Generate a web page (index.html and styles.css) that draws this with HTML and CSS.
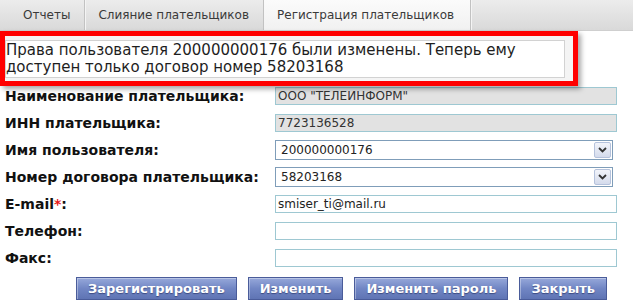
FILE: index.html
```html
<!DOCTYPE html>
<html lang="ru">
<head>
    <meta charset="UTF-8">
    <title>Регистрация плательщиков</title>
    <link rel="stylesheet" href="styles.css">
</head>
<body>
    <ul class="tabs">
        <li class="first">Отчеты</li>
        <li>Слияние плательщиков</li>
        <li class="active">Регистрация плательщиков</li>
    </ul>

    <!-- сообщение после изменения прав -->
    <div class="notice">
        <div class="msg">Права пользователя 200000000176 были изменены. Теперь ему доступен только договор номер 58203168</div>
    </div>

    <div class="form">
        <label>Наименование плательщика:</label>
        <input type="text" class="ro" value='ООО "ТЕЛЕИНФОРМ"' readonly>

        <label>ИНН плательщика:</label>
        <input type="text" class="ro" value="7723136528" readonly>

        <label>Имя пользователя:</label>
        <div class="select"><span>200000000176</span><i class="arrow"><svg width="9" height="6" viewBox="0 0 9 6"><path d="M1 1 L4.5 4.5 L8 1" fill="none" stroke="#333" stroke-width="1.8"/></svg></i></div>

        <label>Номер договора плательщика:</label>
        <div class="select"><span>58203168</span><i class="arrow"><svg width="9" height="6" viewBox="0 0 9 6"><path d="M1 1 L4.5 4.5 L8 1" fill="none" stroke="#333" stroke-width="1.8"/></svg></i></div>

        <label>E-mail<b class="req">*</b>:</label>
        <input type="text" value="smiser_ti@mail.ru">

        <label>Телефон:</label>
        <input type="text" value="">

        <label>Факс:</label>
        <input type="text" value="">
    </div>

    <div class="buttons">
        <button class="btn">Зарегистрировать</button>
        <button class="btn">Изменить</button>
        <button class="btn">Изменить пароль</button>
        <button class="btn">Закрыть</button>
    </div>
</body>
</html>
```

FILE: styles.css
```css
*{margin: 0;padding: 0;box-sizing: border-box;}
body{background: #fff;font-family: "DejaVu Sans", Verdana, sans-serif;color: #222;}
li{list-style-type: none;}

.tabs{display: flex;height: 31px;background: linear-gradient(#ececec, #d9d9d9);border-bottom: 1px solid #cfcfcf;}
.tabs li{padding: 0 14px 0 13px;line-height: 30px;font-size: 12px;color: #3a3a3a;border-right: 1px solid #c2c2c2;box-shadow: 1px 0 0 #f4f4f4;}
.tabs li.first{padding-left: 23px;}
.tabs li.active{padding-right: 16px;background: linear-gradient(#fbfbfb, #f1f1f1);}

.notice{width: 578px;border: 5px solid #f00;padding: 4px 8px 3px 0;background: #f4f4f4;box-shadow: 3px 3px 5px rgba(0,0,0,.35);position: relative;z-index: 1;}
.msg{height: 38px;border: 1px solid #d2d2d2;background: #fff;padding-top: 1px;font-size: 15px;line-height: 17px;color: #1e1e1e;}

.form{display: grid;grid-template-columns: 275px 342px;grid-auto-rows: 27px;align-items: center;margin-top: -4px;}
.form label{padding-left: 5px;font-size: 14px;font-weight: bold;color: #111;}
.req{color: #e81818;}
.form input{width: 342px;height: 18px;border: 1px solid #9ec8d2;padding: 0 2px;font-family: inherit;font-size: 12px;color: #222;outline: none;}
.form input.ro{background: #e2e2e2;color: #333;}

.select{display: flex;align-items: center;justify-content: space-between;width: 338px;height: 20px;border: 1px solid #7f9db9;padding: 0 1px 0 5px;font-size: 12px;color: #222;}
.arrow{display: flex;align-items: center;justify-content: center;width: 17px;height: 16px;border: 1px solid #b5c2dc;border-radius: 2px;background: linear-gradient(#f2f4fa, #d4dbec);}

.buttons{display: flex;gap: 11px;padding: 6px 0 0 76px;}
.btn{height: 23px;padding: 0 11px;border: 1px solid #4a5c9a;background: linear-gradient(#96a8da, #7186c4 50%, #5f74b4);color: #fff;font-family: inherit;font-size: 13px;font-weight: bold;text-shadow: 0 1px 1px rgba(30,40,90,.6);box-shadow: inset 1px 1px 0 rgba(255,255,255,.35);}
```
